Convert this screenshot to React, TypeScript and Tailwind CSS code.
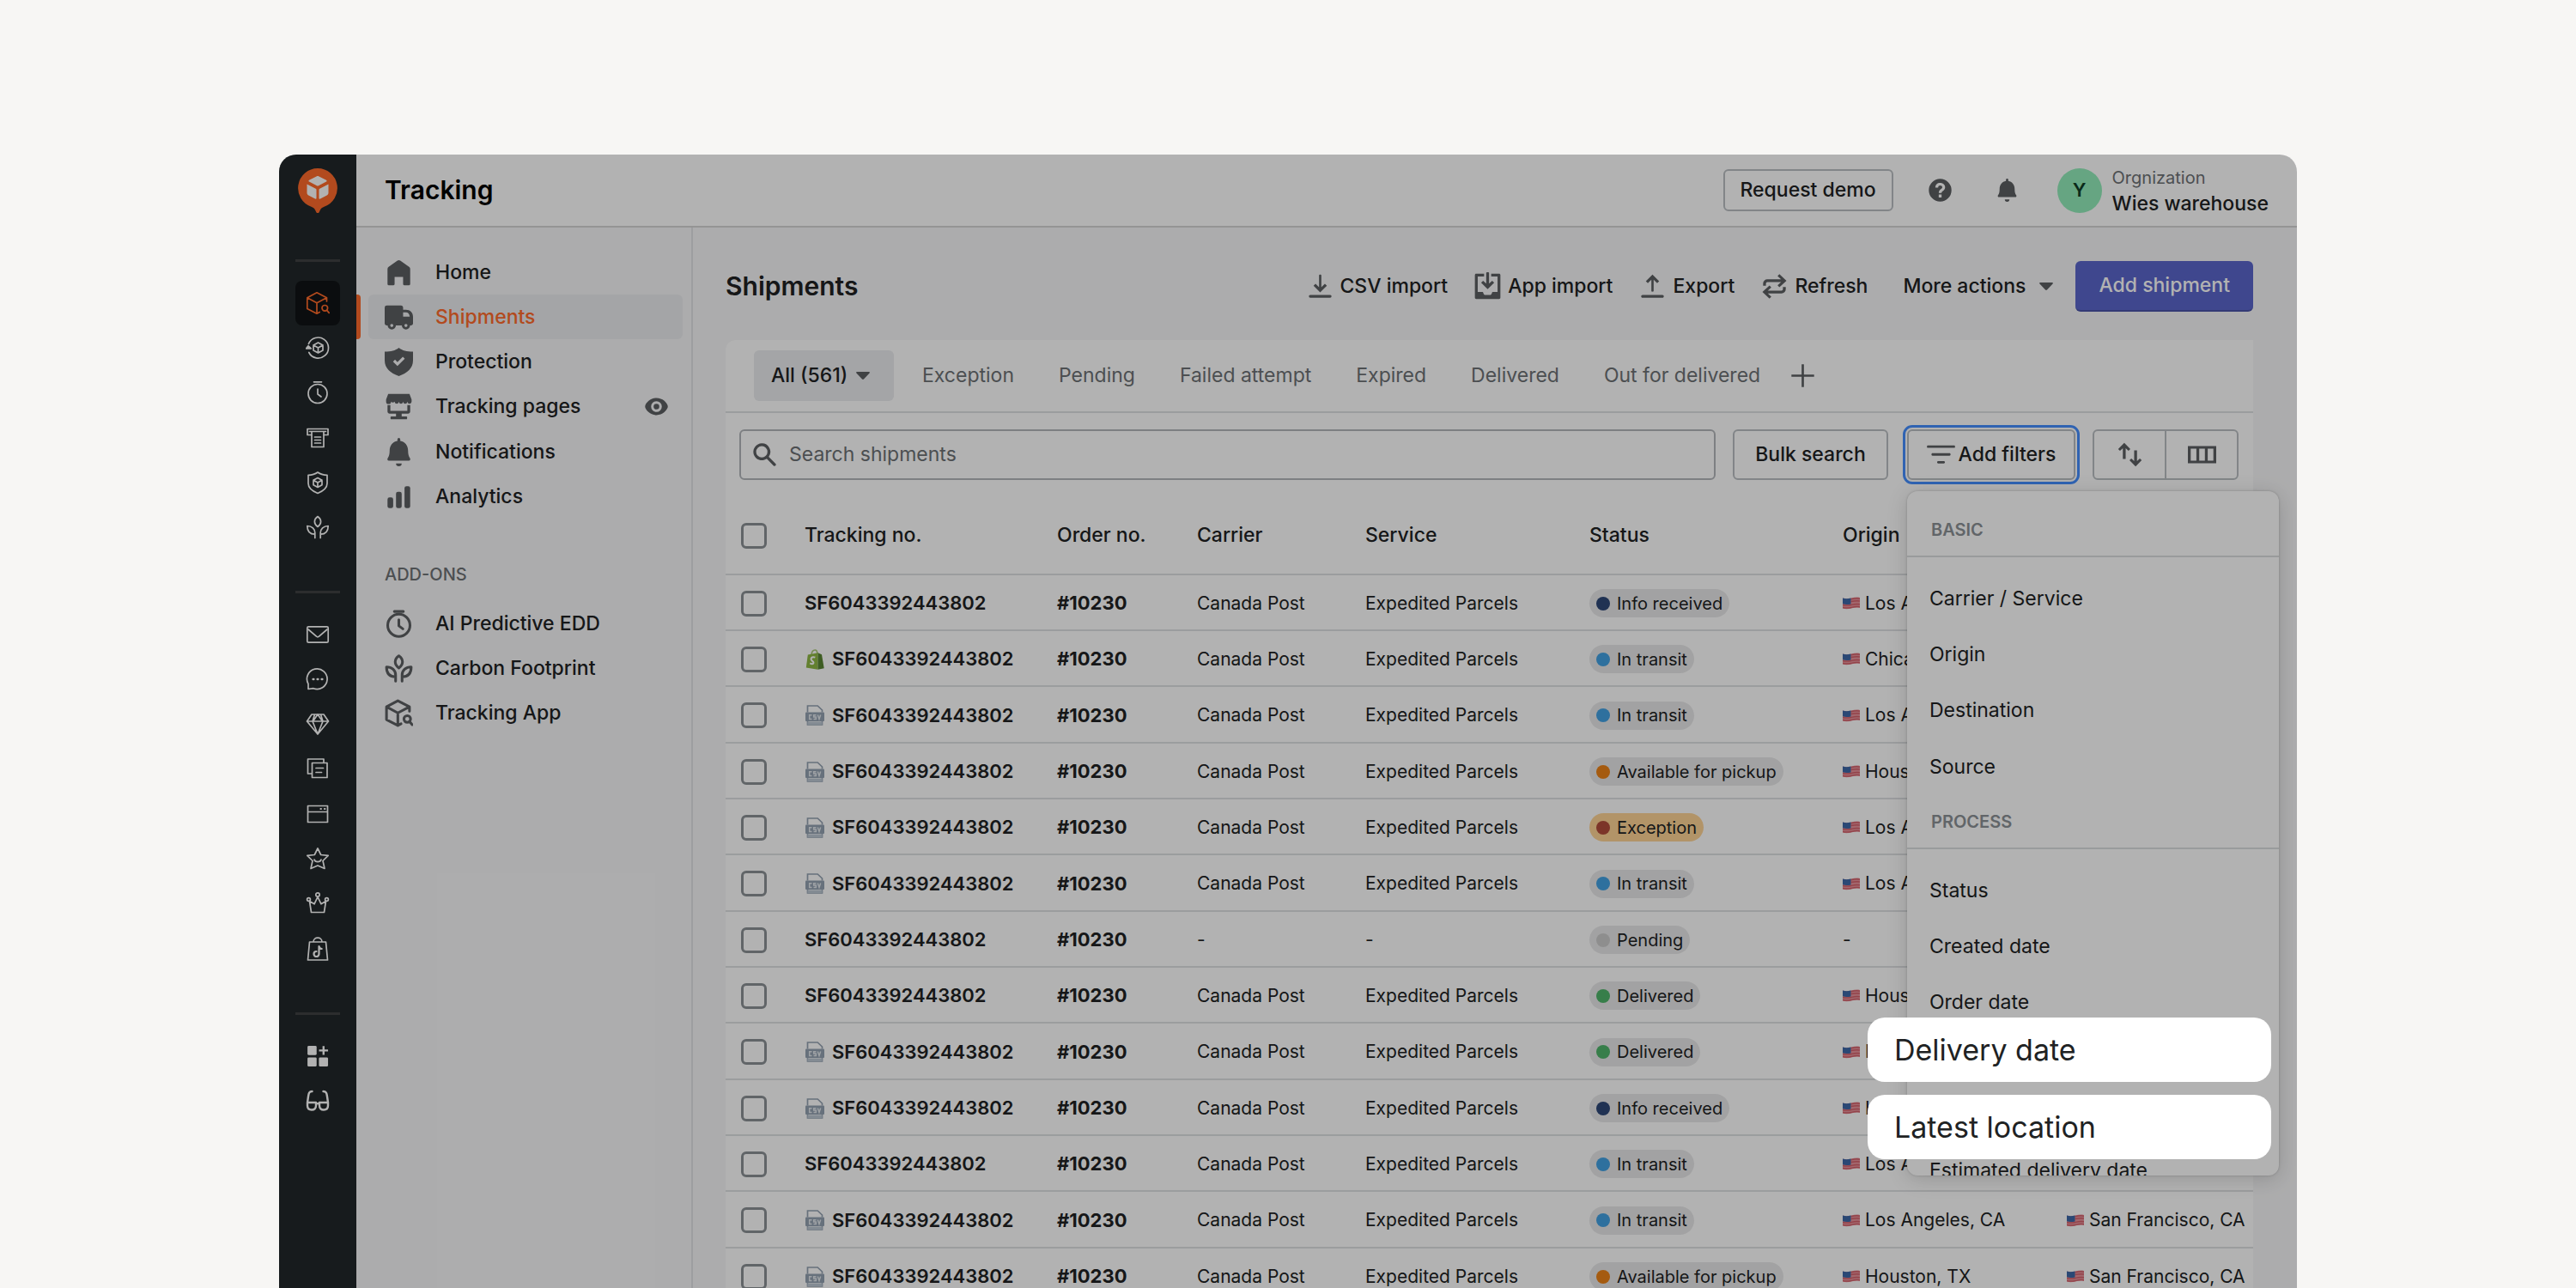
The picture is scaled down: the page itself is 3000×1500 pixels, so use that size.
import type { ReactNode } from 'react'

/* ---------- icons ---------- */

type IconProps = { className?: string }

function Solid({ children, className = 'size-[33px]' }: { children: ReactNode; className?: string }) {
  return (
    <svg viewBox="0 0 20 20" fill="currentColor" fillRule="evenodd" className={'shrink-0 ' + className} aria-hidden="true">
      {children}
    </svg>
  )
}

function Line({ children, className = 'size-7' }: { children: ReactNode; className?: string }) {
  return (
    <svg
      viewBox="0 0 28 28"
      fill="none"
      stroke="currentColor"
      strokeWidth="1.7"
      strokeLinejoin="round"
      strokeLinecap="round"
      className={'shrink-0 ' + className}
      aria-hidden="true"
    >
      {children}
    </svg>
  )
}

const BOX_SEARCH = (
  <>
    <path d="M24.5 12V7.8L13 1.8 1.8 7.8v12.6L13 26.2l3.2-1.7M1.8 7.8 13 13.8l11.5-6M13 13.8v12.4" />
    <circle cx="22.3" cy="19.8" r="3.3" />
    <path d="m24.7 22.4 2.5 3" />
  </>
)
const TIMER = (
  <>
    <circle cx="14" cy="15.5" r="11" />
    <path d="M14 10v6l4 3M9.5 1.8h9" />
  </>
)
const LEAF = (
  <>
    <path d="M14 1.5c-2.4 1.7-3.6 3.8-3.6 6s1.2 4.3 3.6 6c2.4-1.7 3.6-3.8 3.6-6s-1.2-4.3-3.6-6Z" />
    <path d="M10.8 26.5v-6c0-4.5-3.5-8-9-8 0 6 3 9.7 9 9.7M17.2 26.5v-6c0-4.5 3.5-8 9-8 0 6-3 9.7-9 9.7" />
  </>
)

const BoxSearchIcon = (p: IconProps) => <Line {...p}>{BOX_SEARCH}</Line>
const TimerIcon = (p: IconProps) => <Line {...p}>{TIMER}</Line>
const LeafIcon = (p: IconProps) => <Line {...p}>{LEAF}</Line>

const ReturnsIcon = () => (
  <Line>
    <path d="M3.4 9.5A12 12 0 1 1 3.8 19.5" />
    <path d="M.6 14.8 3 11.8l3.2 3Z" fill="currentColor" />
    <path d="m14.5 8 5.5 3v6l-5.5 3L9 17v-6ZM9 11l5.5 3 5.5-3M14.5 14v6" />
  </Line>
)
const PrinterIcon = () => (
  <Line>
    <path d="M6.5 11.5H2v-7h24v7h-4.5" />
    <path d="M4.5 7.5h19" />
    <path d="M7 8v17.5h14V8M10.5 14h7M10.5 17.5h7M10.5 21h7" />
  </Line>
)
const ShieldBoxIcon = () => (
  <Line>
    <path d="M14 2c3 2.3 7 3.3 11 3.3V15c0 5.5-5 9-11 11.5C8 24 3 20.5 3 15V5.3C7 5.3 11 4.3 14 2Z" />
    <path d="m14 8.5 5 2.7v5.6l-5 2.7-5-2.7v-5.6ZM9 11.2l5 2.8 5-2.8M14 14v5.5" />
  </Line>
)
const MailIcon = () => (
  <Line>
    <rect x="1.8" y="4.8" width="24.4" height="18.4" rx="1.5" />
    <path d="m3 8 9.5 8.2c.9.7 2.1.7 3 0L25 8" />
  </Line>
)
const ChatIcon = () => (
  <Line>
    <path d="M3 25.5v-6A11.8 11.8 0 1 1 9 24.7l-6 .8Z" />
    <path d="M8.7 14h.6M13.7 14h.6M18.7 14h.6" strokeWidth="2.6" />
  </Line>
)
const GemIcon = () => (
  <Line>
    <path d="M7 3h14l5.5 8L14 26 1.5 11 7 3ZM1.5 11h25M10.5 3 8 11l6 15 6-15-2.5-8M14 3l-5.5 8M14 3l5.5 8" />
  </Line>
)
const CopyIcon = () => (
  <Line>
    <path d="M7 20H2.5V3H21v3.5" />
    <path d="M7.5 7.5H25v17H7.5ZM12 13.5h8.5M12 18.5h6.5" />
  </Line>
)
const WindowIcon = () => (
  <Line>
    <path d="M2.5 4.5h23v19h-23ZM2.5 11.5h23" />
    <path d="M17.5 8h.4M22 8h.4" strokeWidth="2.2" />
  </Line>
)
const StarIcon = () => (
  <Line>
    <path d="m14 2 3.7 7.5 8.5.8-6.2 6.2 2 9-8-3.5-8 3.5 2-9L1.8 10.3l8.5-.8ZM10 15c1 3.5 7 3.5 8 0" />
  </Line>
)
const CrownIcon = () => (
  <Line>
    <circle cx="14" cy="4" r="2.2" />
    <circle cx="3.5" cy="9.5" r="1.9" />
    <circle cx="24.5" cy="9.5" r="1.9" />
    <path d="m4.5 11.5 2 13h15l2-13-5.500 3.300L14 6.500l-4 8.300-5.500-3.300Z" />
  </Line>
)
const ShopBagIcon = () => (
  <Line className="h-8 w-7">
    <path d="M4.5 7h19L25.5 28h-23ZM9 7c0-6.500 10-6.500 10 0" />
    <path d="M15.5 12v9a3 3 0 1 1-3-3M15.5 12c.3 2 1.500 3 3.200 3" strokeWidth="2.2" />
  </Line>
)
const AppsIcon = () => (
  <Solid className="size-7">
    <rect x="1.5" y="1.5" width="7.6" height="7.6" rx="1" />
    <rect x="1.5" y="11" width="7.6" height="7.6" rx="1" />
    <rect x="11" y="11" width="7.6" height="7.6" rx="1" />
    <path d="M14 1.600h1.700v2.800h2.900v1.700h-2.900v2.900H14V6.100h-2.900V4.400H14z" />
  </Solid>
)
const GlassesIcon = () => (
  <Line>
    <path
      strokeWidth="2.4"
      d="M7.5 3C4 3 3.500 5.500 3 9l-1 7v3.500C2 23 4 24.500 7 24.500s5-1.500 5-5V16H2M20.500 3c3.500 0 4 2.500 4.500 6l1 7v3.500c0 3.500-2 5-5 5s-5-1.500-5-5V16h10M12 18c1-1 3-1 4 0"
    />
  </Line>
)

const HomeIcon = () => (
  <Solid>
    <path d="M9 1.500a1.800 1.800 0 0 1 2 0l6.200 4.400c.5.4.8.9.8 1.500V18a1 1 0 0 1-1 1h-3a1 1 0 0 1-1-1v-5H7v5a1 1 0 0 1-1 1H3a1 1 0 0 1-1-1V7.400c0-.6.3-1.100.8-1.500z" />
  </Solid>
)
const TruckIcon = () => (
  <Solid>
    <path d="M1.500 1.700A1.500 1.500 0 0 0 0 3.200v11c0 .8.6 1.500 1.500 1.500h.6a2.900 2.900 0 0 0 5.800 0h4.200a2.900 2.900 0 0 0 5.800 0h.6c.9 0 1.500-.7 1.500-1.500v-4.500c0-3-2-5-5-5h-2V3.200c0-.9-.6-1.500-1.500-1.500zM5 14.700a1.100 1.100 0 1 1 0 2.200 1.100 1.100 0 0 1 0-2.200m10 0a1.100 1.100 0 1 1 0 2.200 1.100 1.100 0 0 1 0-2.200M13 6.500h2c1.500 0 2.400 1 2.700 3H13z" />
  </Solid>
)
const ShieldCheckIcon = () => (
  <Solid>
    <path d="M10 0c2.500 2 5.500 2.800 10 2.800V9c0 5.500-4 9-10 11C4 18 0 14.500 0 9V2.800C4.500 2.800 7.500 2 10 0m4.200 7.700-1.400-1.400L9 10.100 7.300 8.400 5.900 9.800 9 12.900z" />
  </Solid>
)
const StoreIcon = () => (
  <Solid>
    <path d="M2.500 1h15l1.500 4v1.500a1.500 1.500 0 0 1-3 0 1.500 1.500 0 0 1-3 0 1.500 1.500 0 0 1-3 0 1.500 1.500 0 0 1-3 0 1.500 1.500 0 0 1-2.500 0A1.500 1.500 0 0 1 1 6.500V5z" />
    <path d="M2 9h2v4h12V9h2v4.500c0 .8-.7 1.500-1.500 1.500H12v2h3.500c.5 0 .5 2 0 2h-11c-.5 0-.5-2 0-2H8v-2H3.500c-.8 0-1.500-.7-1.500-1.500z" />
  </Solid>
)
const BellIcon = ({ className }: IconProps) => (
  <Solid className={className}>
    <path d="M10 0a1 1 0 0 0-1 1v1.100C5.600 2.600 3.500 5.500 3.500 9c0 2.500-.4 4-1.300 5.200-.6.800-.2 1.800.8 1.800h14c1 0 1.400-1 .8-1.800-.9-1.200-1.300-2.700-1.300-5.200 0-3.500-2.100-6.400-5.500-6.900V1a1 1 0 0 0-1-1M8 18h4a2 2 0 0 1-4 0" />
  </Solid>
)
const BarsIcon = () => (
  <Solid>
    <rect x="2" y="10.5" width="4" height="7.5" rx="1.4" />
    <rect x="8" y="6.5" width="4" height="11.5" rx="1.4" />
    <rect x="14" y="2.5" width="4" height="15.5" rx="1.4" />
  </Solid>
)
const EyeIcon = () => (
  <Solid>
    <path d="M10 4c-4.500 0-7.200 3.200-8 5.500v1C2.800 12.800 5.500 16 10 16s7.200-3.200 8-5.500v-1C17.200 7.200 14.500 4 10 4m0 2.200a3.800 3.800 0 1 1 0 7.600 3.800 3.800 0 0 1 0-7.600M10 8a2 2 0 1 0 0 4 2 2 0 0 0 0-4" />
  </Solid>
)
const ImportIcon = () => (
  <Solid>
    <path d="M9.200 2.200c0-.7 1.600-.7 1.600 0v8.400l2.500-2.400 1.400 1.400L10 14.200 5.300 9.600l1.400-1.400 2.500 2.400zM3 16h14c1.300 0 1.300 2 0 2H3c-1.300 0-1.300-2 0-2" />
  </Solid>
)
const ExportIcon = () => (
  <Solid>
    <path d="M9.200 13.200c0 .7 1.600.7 1.600 0V5.300l2.500 2.400 1.400-1.400L10 1.700 5.300 6.300l1.400 1.400 2.500-2.400zM3 16h14c1.300 0 1.300 2 0 2H3c-1.300 0-1.300-2 0-2" />
  </Solid>
)
const AppImportIcon = () => (
  <Solid>
    <path d="M7.500 1H1.900C1.400 1 1 1.400 1 1.900v16.200c0 .5.4.9.9.9h16.200c.5 0 .9-.4.9-.9V1.900c0-.5-.4-.9-.9-.9h-5.600v2H17v11h-3.500c-.5 0-.5 2-1.500 2H8c-1 0-1-2-1.500-2H3V3h4.500z" />
    <path d="M9 .5c0-.7 2-.7 2 0v7.600l2.200-2.100 1.400 1.400L10 12 5.400 7.400 6.800 6 9 8.100z" />
  </Solid>
)
const RefreshIcon = () => (
  <Solid>
    <path d="M13.500 1.400 18.500 6l-5 4.600-1.300-1.400L14.700 7H5a1 1 0 0 0-1 1v1.500H2V8a3 3 0 0 1 3-3h9.700l-2.500-2.200zM6.500 18.600 1.500 14l5-4.600 1.300 1.400L5.300 13H15a1 1 0 0 0 1-1v-1.500h2V12a3 3 0 0 1-3 3H5.300l2.500 2.200z" />
  </Solid>
)
const PlusIcon = () => (
  <Solid>
    <path d="M9.200 2h1.600v7.200H18v1.600h-7.200V18H9.200v-7.200H2V9.200h7.200z" />
  </Solid>
)
const SearchIcon = () => (
  <Solid>
    <path d="M8 2a6 6 0 1 0 3.500 10.900l4.700 4.800c1 1 2.400-.4 1.500-1.400l-4.800-4.800A6 6 0 0 0 8 2m0 2a4 4 0 1 1 0 8 4 4 0 0 1 0-8" />
  </Solid>
)
const FilterIcon = () => (
  <Solid>
    <path d="M.8 3.500h18.400c1 0 1 1.700 0 1.700H.8c-1 0-1-1.700 0-1.700M4 9h12c1 0 1 1.700 0 1.700H4C3 10.700 3 9 4 9m4 5.500h4c1 0 1 1.700 0 1.700H8c-1 0-1-1.700 0-1.700" />
  </Solid>
)
const SortIcon = () => (
  <Solid>
    <path d="M6 1.700 10.300 6 9 7.300 7 5.400V13H5V5.400L3 7.300 1.700 6zM14 18.300 9.700 14l1.300-1.300 2 1.900V7h2v7.600l2-1.900 1.300 1.300z" />
  </Solid>
)
const ColumnsIcon = () => (
  <Solid>
    <path d="M0 4v12h20V4zm2 1.800h4v8.400H2zm6 0h4v8.400H8zm6 0h4v8.400h-4z" />
  </Solid>
)
const HelpIcon = () => (
  <Solid>
    <path d="M10 2a8 8 0 1 0 0 16 8 8 0 0 0 0-16m-1 11h2v2.200H9zm-2.400-4.800C6.600 6 8 4.800 10 4.800s3.500 1.300 3.500 3.100c0 1.400-.8 2.100-1.600 2.700-.6.400-.9.700-.9 1.400H9c0-1.500.7-2.200 1.500-2.800.6-.4 1-.7 1-1.300S10.900 6.700 10 6.700s-1.400.5-1.400 1.500z" />
  </Solid>
)
const Caret = () => (
  <svg viewBox="0 0 16 9" className="h-[9px] w-4 shrink-0" fill="currentColor" aria-hidden="true">
    <path d="M1 0h14c.9 0 1.200.9.6 1.500L9 8.500c-.6.6-1.400.6-2 0L.4 1.500C-.2.900.1 0 1 0Z" />
  </svg>
)

const LogoPin = () => (
  <svg viewBox="0 0 46 52" className="h-[52px] w-[46px]" role="img" aria-label="Home">
    <path fill="#ff6b2b" d="M23 0a23 23 0 0 1 7.500 44.700c-3 1-4.300 2.700-5.500 5.800-.7 2-3.300 2-4 0-1.200-3.100-2.500-4.800-5.500-5.800A23 23 0 0 1 23 0Z" />
    <path fill="#fff" d="M22 9.300c.7-.3 1.300-.3 2 0l9 4.500c.8.400.8 1.400 0 1.800l-9 4.700c-.7.300-1.300.3-2 0l-9-4.700c-.8-.4-.8-1.400 0-1.800ZM10.500 18.500l10.200 5.300c.5.300.8.700.8 1.300v9.600c0 .9-.8 1.200-1.500.9l-7.700-4.200c-1.100-.6-1.800-1.700-1.800-3ZM35.500 18.500v9.900c0 1.300-.7 2.400-1.800 3L26 35.600c-.7.300-1.500 0-1.500-.9v-9.600c0-.6.300-1 .8-1.300Z" />
  </svg>
)

const CsvIcon = () => (
  <svg viewBox="0 0 24 24" className="size-6 shrink-0" role="img" aria-label="CSV">
    <path d="M3.500 8.500V1h11.700L20.500 6v2.500M3.500 18v5h17v-5" fill="none" stroke="#94a2b2" strokeWidth="1.7" />
    <rect x="1" y="8.5" width="22" height="10.5" rx="1" fill="#94a2b2" />
    <rect x="3.5" y="19.5" width="17" height="3.5" fill="#bcc7d3" />
    <path
      d="M8.500 11.700H5.700v4.800h2.800M13.500 11.700h-2.800v2.300h2.600v2.500h-2.800M15.300 11.500l1.700 5 1.700-5"
      fill="none"
      stroke="#e3e8ed"
      strokeWidth="1.5"
    />
  </svg>
)
const ShopifyIcon = () => (
  <svg viewBox="0 0 24 24" className="size-6 shrink-0" role="img" aria-label="Shopify">
    <path d="M8 6.500C8.300 3.500 10 1 12.200 1c1.700 0 2.600 2 2.700 4.500" fill="none" stroke="#a9c877" strokeWidth="1.6" />
    <path d="M3.800 6.500 15.500 4.300v19.400L1.800 21.500Z" fill="#8fb844" />
    <path d="m15.500 4.300 4.500 1.900 2.700 16-7.200 1.500Z" fill="#5a8633" />
    <path d="M12.300 9.700c-2.700-1.200-4.800 0-4.800 1.900 0 2.200 3.200 2.300 3 4.300-.2 1.600-2.100 1.700-4.200.4" fill="none" stroke="#fff" strokeWidth="2" />
  </svg>
)
const UsFlag = () => (
  <svg viewBox="0 0 20 15" className="h-[15px] w-5 shrink-0" role="img" aria-label="United States">
    <path d="M0 1.500c3.500 1.200 6.500.8 10 0s6.500-1.500 10-.5v12c-3.500-1-6.500-.3-10 .5s-6.500 1.200-10 0Z" fill="#e8949c" />
    <path
      d="M9.500 2.700c3.500-.8 7-1.500 10.500-.5M9.500 5.600c3.500-.8 7-1.500 10.500-.5M0 9.400c3.500 1.200 6.500.8 10 0s6.500-1.500 10-.5M0 12.400c3.500 1.200 6.500.8 10 0s6.500-1.500 10-.5"
      fill="none"
      stroke="#d4606b"
      strokeWidth="1.5"
    />
    <path d="M0 1.500c3.300 1.200 6.300.8 9.500.1v6.800c-3.200.7-6.200 1-9.500-.2Z" fill="#3d68a8" />
  </svg>
)

/* ---------- data ---------- */

type RailEntry = { label: string; icon: ReactNode; active?: boolean }

const RAIL: RailEntry[][] = [
  [
    { label: 'Tracking', icon: <BoxSearchIcon />, active: true },
    { label: 'Returns', icon: <ReturnsIcon /> },
    { label: 'Delivery dates', icon: <TimerIcon /> },
    { label: 'Shipping', icon: <PrinterIcon /> },
    { label: 'Protection', icon: <ShieldBoxIcon /> },
    { label: 'Green', icon: <LeafIcon /> },
  ],
  [
    { label: 'Email', icon: <MailIcon /> },
    { label: 'Messages', icon: <ChatIcon /> },
    { label: 'Loyalty', icon: <GemIcon /> },
    { label: 'Feed', icon: <CopyIcon /> },
    { label: 'Page builder', icon: <WindowIcon /> },
    { label: 'Reviews', icon: <StarIcon /> },
    { label: 'Rewards', icon: <CrownIcon /> },
    { label: 'Shop', icon: <ShopBagIcon /> },
  ],
  [
    { label: 'All apps', icon: <AppsIcon /> },
    { label: 'Explore', icon: <GlassesIcon /> },
  ],
]

const NAV = [
  { label: 'Home', icon: <HomeIcon /> },
  { label: 'Shipments', icon: <TruckIcon />, active: true },
  { label: 'Protection', icon: <ShieldCheckIcon /> },
  { label: 'Tracking pages', icon: <StoreIcon />, trailing: <EyeIcon /> },
  { label: 'Notifications', icon: <BellIcon /> },
  { label: 'Analytics', icon: <BarsIcon /> },
]
const ADDONS = [
  { label: 'AI Predictive EDD', icon: <TimerIcon className="size-[33px] stroke-[2.6]" /> },
  { label: 'Carbon Footprint', icon: <LeafIcon className="size-[33px] stroke-[2.6]" /> },
  { label: 'Tracking App', icon: <BoxSearchIcon className="size-[33px] stroke-[2.6]" /> },
]

const TABS = ['Exception', 'Pending', 'Failed attempt', 'Expired', 'Delivered', 'Out for delivered']

type Status = 'Info received' | 'In transit' | 'Available for pickup' | 'Exception' | 'Pending' | 'Delivered'

const DOT: Record<Status, string> = {
  'Info received': 'bg-[#2e4877]',
  'In transit': 'bg-[#43a1e3]',
  'Available for pickup': 'bg-[#ed8317]',
  Exception: 'bg-[#b24c3b]',
  Pending: 'bg-[#cccccc]',
  Delivered: 'bg-[#4fb56a]',
}

type Row = { source?: 'csv' | 'shopify'; status: Status; origin: string; empty?: boolean }

const LA = 'Los Angeles, CA'
const HOUSTON = 'Houston, TX'
const ROWS: Row[] = [
  { status: 'Info received', origin: LA },
  { source: 'shopify', status: 'In transit', origin: 'Chicago, IL' },
  { source: 'csv', status: 'In transit', origin: LA },
  { source: 'csv', status: 'Available for pickup', origin: HOUSTON },
  { source: 'csv', status: 'Exception', origin: LA },
  { source: 'csv', status: 'In transit', origin: LA },
  { status: 'Pending', origin: '-', empty: true },
  { status: 'Delivered', origin: HOUSTON },
  { source: 'csv', status: 'Delivered', origin: HOUSTON },
  { source: 'csv', status: 'Info received', origin: HOUSTON },
  { status: 'In transit', origin: LA },
  { source: 'csv', status: 'In transit', origin: LA },
  { source: 'csv', status: 'Available for pickup', origin: HOUSTON },
]

/* ---------- pieces ---------- */

function Rail() {
  return (
    <aside className="flex w-[90px] shrink-0 flex-col items-center bg-[#22282a] pt-4 text-white">
      <a href="#home">
        <LogoPin />
      </a>
      <nav aria-label="Products" className="flex flex-col items-center pt-[54px]">
        {RAIL.map((group, i) => (
          <ul key={i} className="mb-[48px] w-[52px] border-t-[3px] border-[#404143] pt-[22px]">
            {group.map((entry) => (
              <li key={entry.label} className="h-[52px] nth-[4n]:h-[53px]">
                <a
                  href="#product"
                  aria-label={entry.label}
                  className={
                    'flex size-[52px] items-center justify-center rounded-lg ' +
                    (entry.active ? 'bg-[#111416] text-[#ff6b2b]' : '')
                  }
                >
                  {entry.icon}
                </a>
              </li>
            ))}
          </ul>
        ))}
      </nav>
    </aside>
  )
}

function NavList({ items }: { items: { label: string; icon: ReactNode; active?: boolean; trailing?: ReactNode }[] }) {
  return (
    <ul>
      {items.map((item) => (
        <li key={item.label} className="relative h-[52px] pr-2.5 pl-3.5 nth-[4n]:h-[53px]">
          {item.active && <span className="absolute inset-y-0 left-0 w-[5px] rounded-r-sm bg-[#ff6b2b]" />}
          <a
            href="#section"
            className={
              'flex h-[52px] items-center rounded-md pr-3.5 pl-[19px] text-[23px] font-medium ' +
              (item.active ? 'bg-[#ebecef] text-[#ff6b2b]' : '')
            }
          >
            <span className="text-[#5c5f62]">{item.icon}</span>
            <span className="flex-1 pl-[26px]">{item.label}</span>
            {item.trailing && <span className="text-[#5c5f62]">{item.trailing}</span>}
          </a>
        </li>
      ))}
    </ul>
  )
}

function TopBar() {
  return (
    <header className="flex h-[85px] shrink-0 items-center border-b-2 border-[#d4d4d5] bg-white pr-[33px] pl-[33px]">
      <h1 className="text-[30px] font-semibold text-black">Tracking</h1>
      <button
        type="button"
        className="ml-auto h-[49px] rounded-md border-2 border-[#babfc3] px-[18px] text-[23px] font-medium"
      >
        Request demo
      </button>
      <button type="button" aria-label="Help" className="ml-[38px] text-[#5c5f62]">
        <HelpIcon />
      </button>
      <button type="button" aria-label="Alerts" className="ml-[48px] text-[#5c5f62]">
        <BellIcon className="size-[27px]" />
      </button>
      <button type="button" className="ml-[45px] flex items-center gap-3 text-left">
        <span className="flex size-[52px] items-center justify-center rounded-full bg-[#92ecba] text-[22px] font-semibold text-[#0f3d26]">
          Y
        </span>
        <span className="block">
          <span className="block text-[20px] leading-[30px] text-[#6d7175]">Orgnization</span>
          <span className="block text-[23px] leading-[30px] font-medium">Wies warehouse</span>
        </span>
      </button>
    </header>
  )
}

function Action({ icon, children }: { icon: ReactNode; children: ReactNode }) {
  return (
    <button type="button" className="flex items-center gap-[7px] text-[23px] font-medium">
      <span className="text-[#5c5f62]">{icon}</span>
      {children}
    </button>
  )
}

function MenuGroup({ title, children }: { title: string; children: ReactNode }) {
  return (
    <section>
      <h3 className="flex h-[63px] items-center border-b-2 border-[#dcdee0] pl-7 text-[20px] font-semibold text-[#8c9196]">
        {title}
      </h3>
      <ul className="pt-4">{children}</ul>
    </section>
  )
}

function MenuItem({ children }: { children: ReactNode }) {
  return (
    <li className="h-[65px] nth-[3n]:h-[66px]">
      <button type="button" className="flex h-[65px] w-full items-center pl-[26px] text-[23px]">
        {children}
      </button>
    </li>
  )
}

function FilterControl() {
  return (
    <div className="relative shrink-0">
      <button
        type="button"
        aria-expanded="true"
        className="flex h-[59px] w-[196px] items-center justify-center gap-1 rounded-md border-2 border-[#babfc3] text-[23px] font-medium outline-[3px] outline-offset-2 outline-[#458fff]"
      >
        <span className="text-[#5c5f62]">
          <FilterIcon />
        </span>
        Add filters
      </button>

      <div className="absolute top-[72px] left-0 z-10 max-h-[797px] w-[433px] overflow-hidden rounded-xl bg-white pt-3.5 shadow-[0_4px_24px_rgba(0,0,0,0.16),0_0_3px_rgba(0,0,0,0.2)]">
        <MenuGroup title="BASIC">
          <MenuItem>Carrier / Service</MenuItem>
          <MenuItem>Origin</MenuItem>
          <MenuItem>Destination</MenuItem>
          <MenuItem>Source</MenuItem>
        </MenuGroup>
        <MenuGroup title="PROCESS">
          <MenuItem>Status</MenuItem>
          <MenuItem>Created date</MenuItem>
          <MenuItem>Order date</MenuItem>
          <li aria-hidden="true" className="h-[130px]" />
          <MenuItem>Estimated delivery date</MenuItem>
        </MenuGroup>
      </div>

      {/* Highlighted choices stay above the scrim */}
      <div className="absolute top-[685px] -left-[46px] z-30 flex w-[470px] flex-col gap-[15px]">
        {['Delivery date', 'Latest location'].map((label) => (
          <button
            key={label}
            type="button"
            className="h-[75px] rounded-[20px] bg-white pl-[31px] text-left text-[34px] text-[#202223]"
          >
            {label}
          </button>
        ))}
      </div>
    </div>
  )
}

function Checkbox({ label }: { label: string }) {
  return (
    <input
      type="checkbox"
      aria-label={label}
      className="block size-[30px] appearance-none rounded-md border-3 border-[#8c9196] bg-white"
    />
  )
}

function Badge({ status }: { status: Status }) {
  return (
    <span
      className={
        'inline-flex h-[33px] items-center gap-2 rounded-full px-2 align-middle text-[20px] ' +
        (status === 'Exception' ? 'bg-[#ffd596]' : 'bg-[#e9e9ea]')
      }
    >
      <span className={'size-4 rounded-full ' + DOT[status]} />
      {status}
    </span>
  )
}

function Place({ name }: { name: string }) {
  if (name === '-') return <>-</>
  return (
    <span className="flex items-center gap-1.5">
      <UsFlag />
      {name}
    </span>
  )
}

function ShipmentTable() {
  return (
    <table className="w-full table-fixed border-collapse text-left whitespace-nowrap">
      <colgroup>
        <col className="w-[92px]" />
        <col className="w-[294px]" />
        <col className="w-[163px]" />
        <col className="w-[196px]" />
        <col className="w-[261px]" />
        <col className="w-[295px]" />
        <col className="w-[261px]" />
        <col />
      </colgroup>
      <thead>
        <tr className="h-[90px] border-b-2 border-[#dfe1e3] text-[23px] [&>th]:font-medium">
          <th className="pl-[18px]">
            <Checkbox label="Select all shipments" />
          </th>
          <th>Tracking no.</th>
          <th>Order no.</th>
          <th>Carrier</th>
          <th>Service</th>
          <th>Status</th>
          <th>Origin</th>
          <th>Destination</th>
        </tr>
      </thead>
      <tbody className="text-[21px]">
        {ROWS.map((row, i) => (
          <tr key={i} className="h-[65px] border-b-2 border-[#dfe1e3] nth-[3n]:h-[66px] [&>td]:pt-0.5">
            <td className="pl-[18px]">
              <Checkbox label={'Select shipment ' + (i + 1)} />
            </td>
            <td className="text-[22px] font-semibold">
              <span className="flex items-center gap-2">
                {row.source === 'csv' && <CsvIcon />}
                {row.source === 'shopify' && <ShopifyIcon />}
                SF6043392443802
              </span>
            </td>
            <td className="text-[22px] font-bold">#10230</td>
            <td>{row.empty ? '-' : 'Canada Post'}</td>
            <td>{row.empty ? '-' : 'Expedited Parcels'}</td>
            <td>
              <Badge status={row.status} />
            </td>
            <td>
              <Place name={row.origin} />
            </td>
            <td>
              <Place name={row.empty ? '-' : 'San Francisco, CA'} />
            </td>
          </tr>
        ))}
      </tbody>
    </table>
  )
}

function Shipments() {
  return (
    <main className="min-w-0 flex-1 pt-[39px] pr-[51px] pl-[38px]">
      <div className="flex h-[59px] items-center">
        <h2 className="mr-auto text-[30px] font-semibold">Shipments</h2>
        <div className="flex items-center gap-[30px]">
          <Action icon={<ImportIcon />}>CSV import</Action>
          <Action icon={<AppImportIcon />}>App import</Action>
          <Action icon={<ExportIcon />}>Export</Action>
          <Action icon={<RefreshIcon />}>Refresh</Action>
        </div>
        <button type="button" className="ml-[41px] flex items-center gap-4 text-[23px] font-medium">
          More actions
          <span className="text-[#5c5f62]">
            <Caret />
          </span>
        </button>
        <button
          type="button"
          className="ml-[26px] h-[59px] rounded-md border-b-2 border-[#4a54a8] bg-[#5b66cc] px-[27px] text-[23px] font-medium text-white"
        >
          Add shipment
        </button>
      </div>

      <section className="mt-[33px] rounded-tl-xl bg-white">
        <div role="tablist" className="flex h-[85px] items-center border-b-2 border-[#dfe1e3] pl-[33px]">
          <button
            type="button"
            role="tab"
            aria-selected="true"
            className="mr-[33px] flex h-[59px] w-[163px] items-center gap-2.5 rounded-md bg-[#ebecef] pl-5 text-[23px] font-medium"
          >
            All (561)
            <span className="text-[#5c5f62]">
              <Caret />
            </span>
          </button>
          <div className="flex gap-[52px]">
            {TABS.map((tab) => (
              <button key={tab} type="button" role="tab" aria-selected="false" className="text-[23px] text-[#6d7175]">
                {tab}
              </button>
            ))}
          </div>
          <button type="button" aria-label="Add view" className="ml-[33px] text-[#5c5f62]">
            <PlusIcon />
          </button>
        </div>

        <div className="flex items-center pt-[19px] pr-[17px] pb-5 pl-4">
          <div className="flex h-[59px] flex-1 items-center gap-3 rounded-md border-2 border-[#b3b7bb] pl-[11px] text-[#5c5f62]">
            <SearchIcon />
            <input
              type="search"
              aria-label="Search shipments"
              placeholder="Search shipments"
              className="min-w-0 flex-1 bg-transparent text-[23px] outline-none placeholder:text-[#6d7175]"
            />
          </div>
          <button
            type="button"
            className="mr-[22px] ml-5 h-[59px] w-[181px] shrink-0 rounded-md border-2 border-[#babfc3] text-[23px] font-medium"
          >
            Bulk search
          </button>
          <FilterControl />
          <div className="ml-5 flex h-[59px] w-[170px] shrink-0 divide-x-2 divide-[#babfc3] rounded-md border-2 border-[#babfc3] text-[#5c5f62]">
            <button type="button" aria-label="Sort" className="flex flex-1 items-center justify-center">
              <SortIcon />
            </button>
            <button type="button" aria-label="Columns" className="flex flex-1 items-center justify-center">
              <ColumnsIcon />
            </button>
          </div>
        </div>

        <ShipmentTable />
      </section>
    </main>
  )
}

export default function App() {
  return (
    <div className="flex h-screen justify-center overflow-hidden bg-[#f7f6f4] pt-[180px] font-['Inter',sans-serif] text-[#202223]">
      <div className="relative isolate flex w-full max-w-[2350px] overflow-hidden rounded-t-[20px] bg-[#f7f7f8]">
        <Rail />
        <div className="flex min-w-0 flex-1 flex-col">
          <TopBar />
          <div className="flex flex-1">
            <aside className="w-[392px] shrink-0 border-r-2 border-[#e1e3e5] pt-[26px]">
              <nav aria-label="Tracking">
                <NavList items={NAV} />
                <h2 className="pt-[50px] pb-4 pl-[33px] text-[20px] leading-[30px] font-medium text-[#6d7175]">
                  ADD-ONS
                </h2>
                <NavList items={ADDONS} />
              </nav>
            </aside>
            <Shipments />
          </div>
        </div>
        <div className="pointer-events-none absolute inset-0 z-20 bg-black/30" />
      </div>
    </div>
  )
}
